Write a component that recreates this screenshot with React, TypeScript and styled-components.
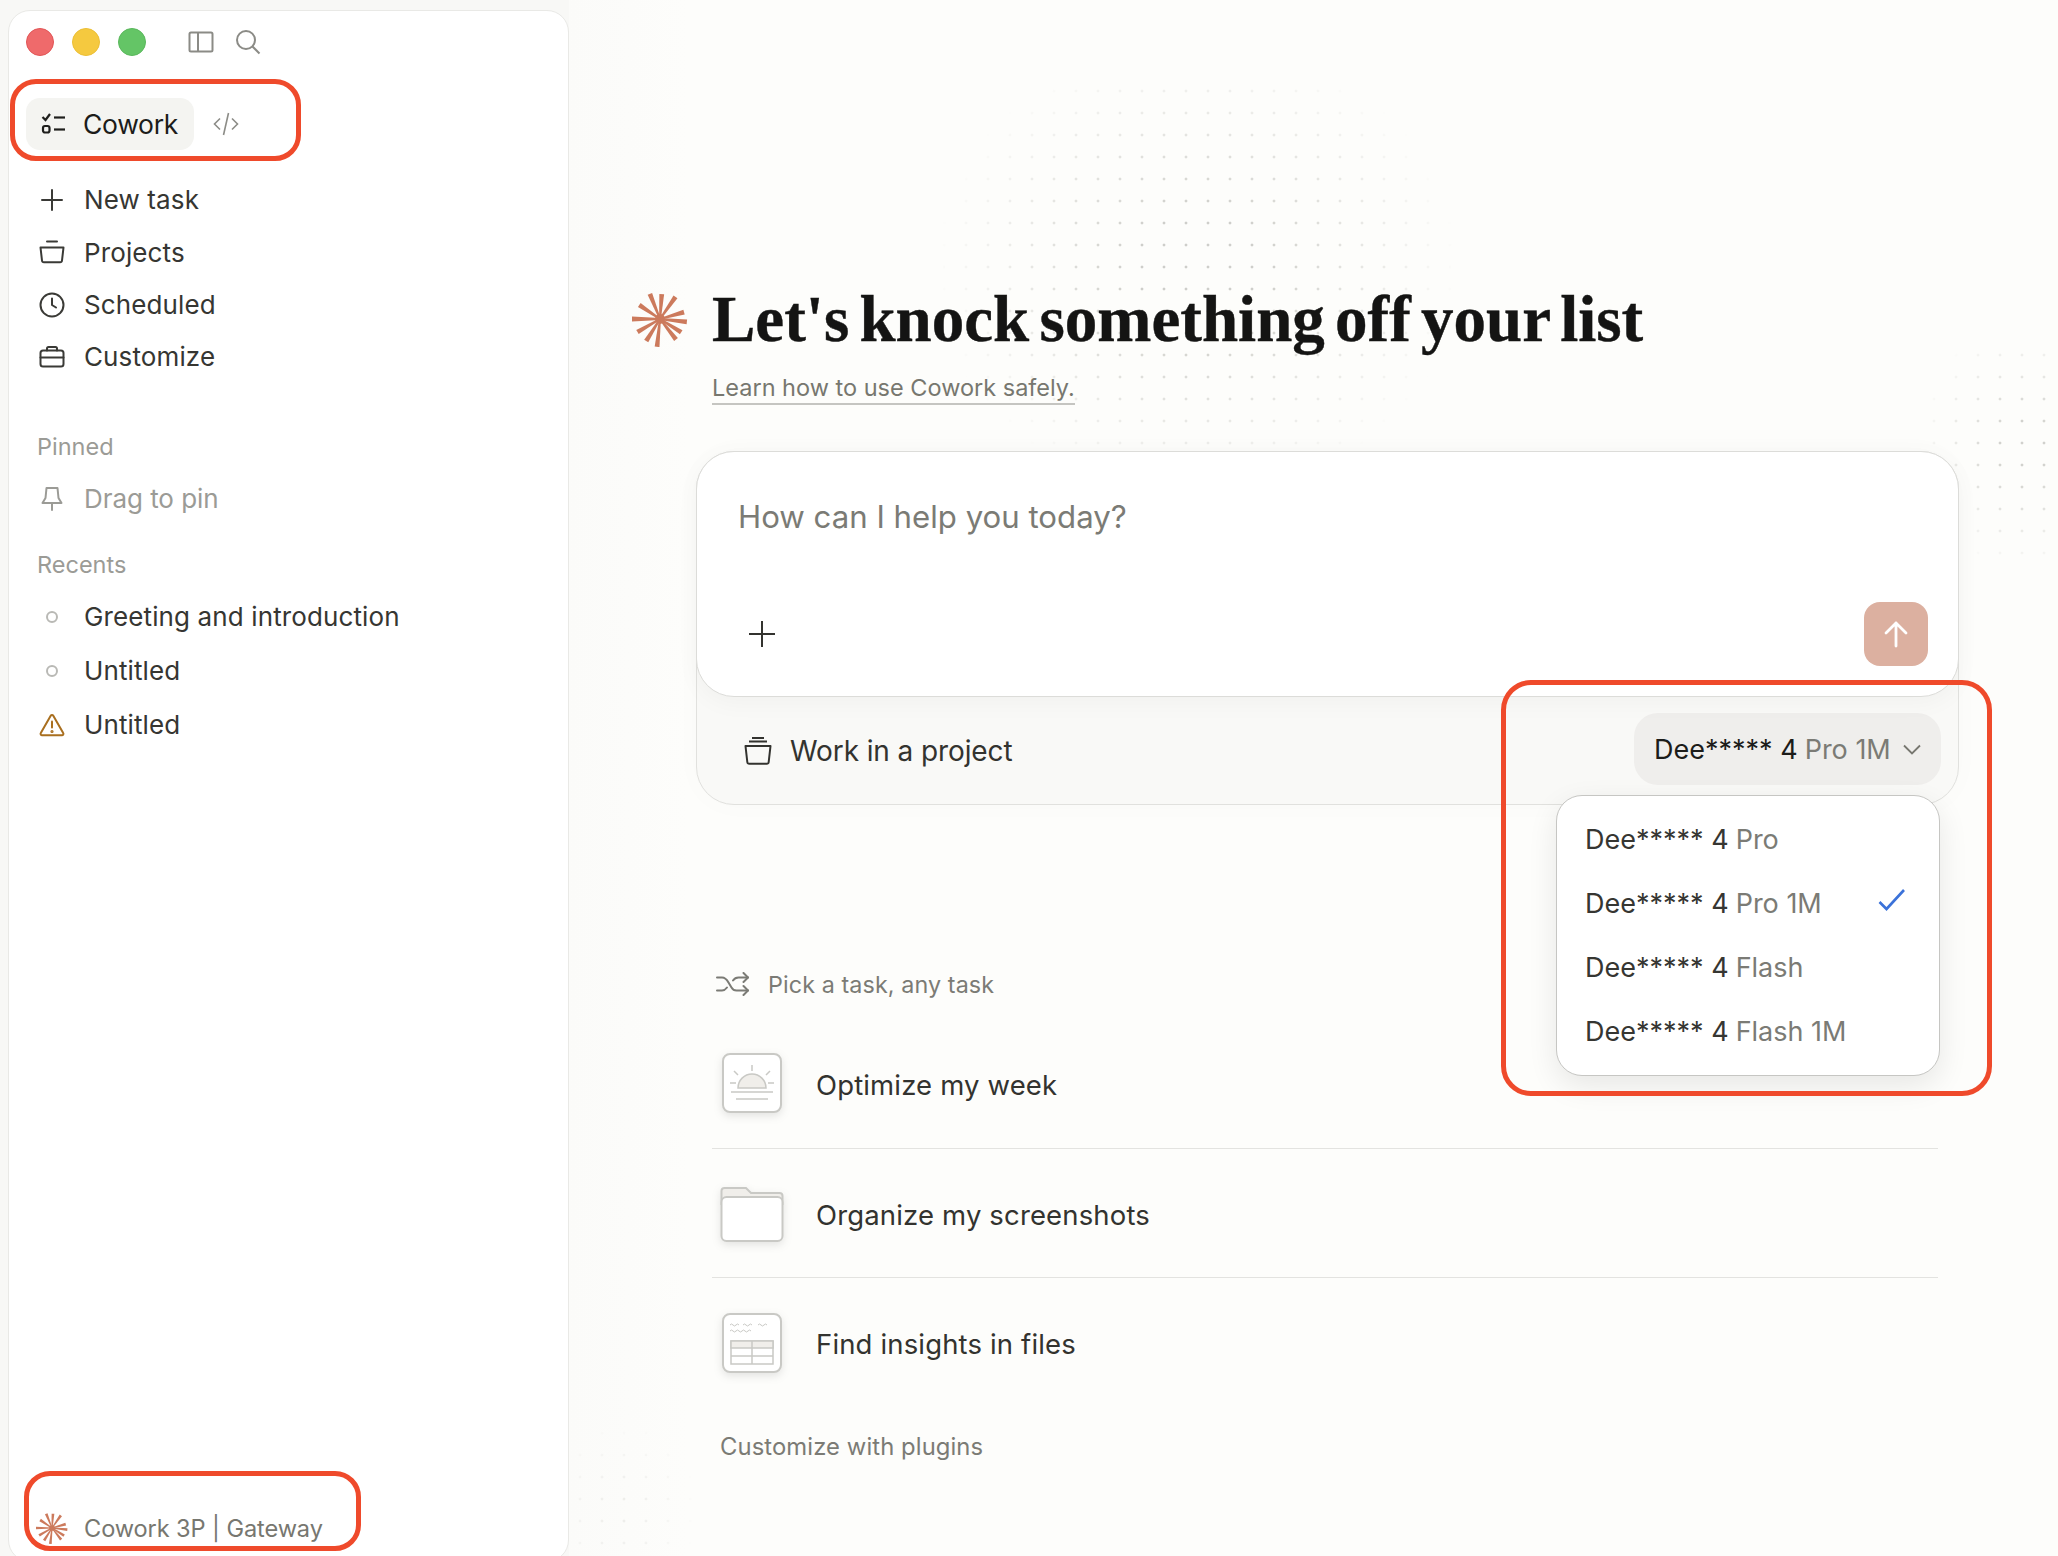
import React from "react";
import styled, { createGlobalStyle } from "styled-components";

const Global = createGlobalStyle`
  html, body { margin: 0; padding: 0; background: #f8f8f6; }
  body { font-family: Inter, "Noto Sans", "Liberation Sans", sans-serif; color: #33332f; -webkit-font-smoothing: antialiased; }
  * { box-sizing: border-box; }
`;

const Page = styled.div`
  width: 2058px; height: 1556px; display: flex; overflow: hidden; position: relative;
  background: #f8f8f6;
`;

const Sidebar = styled.aside`
  width: 561px; height: 1552px; margin: 10px 0 0 8px; flex: none;
  background: #fff; border: 1px solid #e9e9e6; border-radius: 22px;
  display: flex; flex-direction: column; position: relative; padding: 17px 0 0 0;
`;

const TitleBar = styled.div`
  display: flex; align-items: center; height: 28px; padding-left: 17px;
`;
const Light = styled.span<{ $c: string; $b: string }>`
  width: 28px; height: 28px; border-radius: 50%; background: ${p => p.$c};
  border: 1px solid ${p => p.$b}; margin-right: 18px; flex: none;
`;
const TitleIcon = styled.svg`
  width: 26px; height: 26px; fill: none; stroke: #8b8b86; stroke-width: 2; flex: none; margin-right: 21px;
  &:first-of-type { margin-left: 24px; }
`;

const ModeRow = styled.div`
  display: flex; align-items: center; margin: 42px 0 0 17px; height: 52px;
`;
const ModeActive = styled.div`
  width: 168px; height: 52px; border-radius: 14px; background: #f4f4f1;
  display: flex; align-items: center; padding-left: 15px; gap: 16px;
  font-size: 26.500px; letter-spacing: -0.3px; color: #1c1c1a;
`;
const ModeIcon = styled.svg`
  flex: none; fill: none; stroke: #8c8c87; stroke-width: 1.6; width: 26px; height: 26px; margin-left: 19px;
`;

const Nav = styled.nav`
  margin-top: 24px; display: flex; flex-direction: column;
`;
const Row = styled.div<{ $muted?: boolean; $h?: number }>`
  height: ${p => p.$h ?? 52}px; display: flex; align-items: center; padding-left: 28px;
  font-size: 26px; line-height: 1; letter-spacing: ${p => (p.$muted ? "-0.05px" : "0.12px")};
  color: ${p => (p.$muted ? "#9b9b96" : "#363632")};
`;
const RowIcon = styled.span`
  width: 30px; height: 30px; flex: none; margin-right: 17px;
  display: flex; align-items: center; justify-content: center;
  svg { display: block; }
`;
const Bullet = styled.span`
  width: 12px; height: 12px; border-radius: 50%; border: 2px solid #b9b9b5; background: #fff;
`;
const SectionLabel = styled.div<{ $top: number; $bottom: number }>`
  margin-top: ${p => p.$top}px; margin-bottom: ${p => p.$bottom}px; height: 30px; display: flex; align-items: center; padding-left: 28px;
  font-size: 23.500px; color: #9b9b96; letter-spacing: 0;
`;

const Footer = styled.div`
  margin-top: auto; margin-bottom: 13px; display: flex; align-items: center; padding-left: 28px; height: 40px;
  font-size: 23.600px; color: #777770; letter-spacing: -0.1px;
`;

const Callout = styled.div`
  position: absolute; border: 5px solid #ef4a2b; border-radius: 26px; pointer-events: none; z-index: 5;
`;
const CalloutMode = styled(Callout)` left: 1px; top: 68px; width: 291px; height: 82px; `;
const CalloutFooter = styled(Callout)` left: 15px; top: 1460px; width: 337px; height: 80px; `;
const CalloutModel = styled(Callout)` left: 932px; top: 680px; width: 491px; height: 416px; border-radius: 30px; `;

const Main = styled.main`
  flex: 1; position: relative; padding: 283px 0 0 63px;
  background: linear-gradient(90deg, #fbfbf9 0, #fdfdfb 120px);
`;

const DotField = styled.div`
  position: absolute; pointer-events: none;
  background-image: radial-gradient(circle at 11px 11px, #c9c9c4 0, #c9c9c4 1.2px, transparent 1.7px);
  background-size: 22px 22px;
`;
const DotsTop = styled(DotField)`
  left: 342px; top: 80px; width: 572px; height: 396px;
  mask-image: radial-gradient(ellipse 46% 58% at 50% 48%, rgba(0,0,0,.9) 25%, transparent 100%);
`;
const DotsRight = styled(DotField)`
  left: 1354px; top: 344px; width: 135px; height: 230px;
  mask-image: radial-gradient(ellipse 80% 55% at 75% 45%, rgba(0,0,0,.85) 20%, transparent 100%);
`;
const DotsBottom = styled(DotField)`
  left: 0; top: 1400px; width: 130px; height: 160px;
  mask-image: radial-gradient(ellipse 60% 60% at 40% 70%, rgba(0,0,0,.28) 10%, transparent 100%);
`;

const Hero = styled.header`
  display: flex; align-items: center; gap: 24px; height: 72px; position: relative;
`;
const Title = styled.h1`
  margin: 0; font-family: "Liberation Serif", "Times New Roman", serif; font-weight: 700;
  font-size: 65px; letter-spacing: 0; word-spacing: -6px; color: #141413; line-height: 72px; white-space: nowrap;
  -webkit-text-stroke: 0.4px #141413;
`;
const LearnLink = styled.a`
  display: block; width: fit-content; margin: 16px 0 0 80px; position: relative;
  font-size: 23.500px; line-height: 33px; color: #77776f;
  border-bottom: 2px solid #c5c5c1; height: 34px;
`;

const Composer = styled.section`
  position: relative; margin: 46px 0 0 64px; width: 1263px; height: 354px;
  border: 1px solid #e1e1de; border-radius: 38px; background: #f9f9f7;
  box-shadow: 0 0 30px rgba(0,0,0,.02);
`;
const InputCard = styled.div`
  position: relative; height: 246px; margin: -1px -1px 0; background: #fff;
  border: 1px solid #dcdcd9; border-radius: 38px; padding: 45px 0 0 41px;
  font-size: 31.200px; line-height: 40px; color: #7b7b75;
  box-shadow: 0 6px 24px rgba(0,0,0,.035);
`;
const InputTools = styled.div`
  position: absolute; left: 51px; right: 30px; bottom: 30px; display: flex; align-items: center; justify-content: space-between;
`;
const SendButton = styled.div`
  width: 64px; height: 64px; border-radius: 16px; background: #dcb0a0;
  display: flex; align-items: center; justify-content: center;
`;
const Tray = styled.div`
  height: 107px; display: flex; align-items: center; justify-content: space-between; padding: 0 17px 0 46px;
`;
const ProjectLabel = styled.div`
  display: flex; align-items: center; gap: 17px; font-size: 28px; color: #33332f; letter-spacing: -0.1px;
`;
const ModelPill = styled.div`
  height: 72px; width: 307px; border-radius: 24px; background: #efeeec; display: flex; align-items: center;
  padding-left: 20px; font-size: 27px; color: #1c1c1a; margin-top: -3px; white-space: nowrap;
`;
const Variant = styled.span` color: #7b7b75; margin-left: 7px; `;
const Chevron = styled.svg`
  width: 22px; height: 22px; margin-left: 10px; fill: none; stroke: #777770; stroke-width: 1.8; flex: none;
`;

const Menu = styled.div`
  position: absolute; z-index: 3; left: 859px; top: 343px; width: 384px; height: 281px;
  background: #fff; border: 1px solid #c6c6c3; border-radius: 26px; padding: 11px 0 0 28px;
  box-shadow: 0 10px 30px rgba(0,0,0,.09);
`;
const MenuItem = styled.div`
  height: 64px; display: flex; align-items: center; font-size: 27px; color: #363632; white-space: nowrap; position: relative;
`;
const MenuCheck = styled.svg`
  position: absolute; left: 293px; top: 17px; width: 28px; height: 24px; fill: none; stroke: #3b72d9; stroke-width: 2.6;
`;

const Tasks = styled.section`
  margin: 164px 0 0 80px; width: 1226px;
`;
const Prompt = styled.div`
  display: flex; align-items: center; gap: 18px; margin-left: 4px; height: 30px;
  font-size: 23.300px; color: #7b7b75; letter-spacing: 0.1px;
`;
const TaskRow = styled.div<{ $h: number; $top?: number; $last?: boolean }>`
  height: ${p => p.$h}px; padding: ${p => p.$top ?? 0}px 0 0 8px;
  display: flex; align-items: center; gap: 32px;
  border-bottom: ${p => (p.$last ? "none" : "1px solid #e3e3e0")};
`;
const TaskName = styled.span`
  padding-top: 3px; font-size: 27.500px; color: #33332f; letter-spacing: 0.15px;
`;
const TaskThumb = styled.svg`
  width: 64px; height: 64px; flex: none; overflow: visible; filter: drop-shadow(0 3px 4px rgba(0,0,0,.1));
`;
const PluginsLink = styled.div`
  margin: 23px 0 0 8px; font-size: 23.800px; line-height: 34px; color: #7b7b75; letter-spacing: 0.1px;
`;

const spokes: [number, number][] = [
  [-112, 27], [-86, 25], [-55, 27], [-16, 25], [6, 27], [32, 25], [52, 26],
  [96, 28], [122, 26], [150, 26], [180, 28], [214, 25],
];

function Star({ size, color = "#cc7a5c" }: { size: number; color?: string }) {
  const polygons = spokes.map(([a, len]) => {
    const r = (a * Math.PI) / 180;
    const dx = Math.cos(r), dy = Math.sin(r);
    const nx = -dy, ny = dx;
    const c = 28;
    const pts = [
      [c + nx * 0.9, c + ny * 0.9],
      [c + dx * len + nx * 2.4, c + dy * len + ny * 2.4],
      [c + dx * len - nx * 2.4, c + dy * len - ny * 2.4],
      [c - nx * 0.9, c - ny * 0.9],
    ];
    return pts.map(p => p.map(v => v.toFixed(2)).join(",")).join(" ");
  });
  return (
    <svg width={size} height={size} viewBox="0 0 56 56" style={{ flex: "none" }}>
      <circle cx="28" cy="28" r="5" fill={color} />
      {polygons.map((p, i) => <polygon key={i} points={p} fill={color} />)}
    </svg>
  );
}

const strokeIcon = { fill: "none", stroke: "#3a3a36", strokeWidth: 2, strokeLinecap: "round" as const, strokeLinejoin: "round" as const };

export default function App() {
  return (
    <Page>
      <Global />
      <Sidebar>
        <TitleBar>
          <Light $c="#ef6a6b" $b="#e25556" />
          <Light $c="#f5c93f" $b="#ecbf36" />
          <Light $c="#64c566" $b="#5ab85c" />
          <TitleIcon viewBox="0 0 26 26"><rect x="1.500" y="3.500" width="23" height="19" rx="1.500" /><path d="M10 3.500v19" /></TitleIcon>
          <TitleIcon viewBox="0 0 26 26"><circle cx="11" cy="11" r="9" /><path d="M17.500 17.500l7 7" /></TitleIcon>
        </TitleBar>
        <ModeRow>
          <ModeActive>
            <svg width="26" height="26" viewBox="0 0 26 26" fill="none" stroke="#1f1f1d" strokeWidth="2.200">
              <path d="M1.500 6l3 3 4.500-6" /><path d="M13 6.500h11" /><rect x="2" y="15" width="6.500" height="6.500" rx="2" /><path d="M13 18.500h11" />
            </svg>
            Cowork
          </ModeActive>
          <ModeIcon viewBox="0 0 26 26"><path d="M7 7.500l-5.500 5.500 5.500 5.500" /><path d="M19 7.500l5.500 5.500-5.500 5.500" /><path d="M15.500 2l-5 22" /></ModeIcon>
        </ModeRow>
        <Nav>
          <Row>
            <RowIcon><svg width="24" height="24" viewBox="0 0 24 24" {...strokeIcon}><path d="M12 2v20M2 12h20" /></svg></RowIcon>
            New task
          </Row>
          <Row $h={53}>
            <RowIcon><svg width="26" height="26" viewBox="0 0 26 26" {...strokeIcon}><path d="M8 1.500h10" /><path d="M1.500 7.500h23l-1.500 13a2 2 0 0 1-2 1.800H5a2 2 0 0 1-2-1.800z" /></svg></RowIcon>
            Projects
          </Row>
          <Row>
            <RowIcon><svg width="26" height="26" viewBox="0 0 26 26" {...strokeIcon}><circle cx="13" cy="13" r="11.500" /><path d="M13 6.500V13l4 2.500" /></svg></RowIcon>
            Scheduled
          </Row>
          <Row>
            <RowIcon><svg width="26" height="26" viewBox="0 0 26 26" {...strokeIcon}><rect x="1.500" y="6.500" width="23" height="16" rx="2.500" /><path d="M8 6.500V4.500a1.500 1.500 0 0 1 1.500-1.500h7A1.500 1.500 0 0 1 18 4.500v2" /><path d="M1.500 13.500h23" /></svg></RowIcon>
            Customize
          </Row>
        </Nav>
        <SectionLabel $top={48} $bottom={12}>Pinned</SectionLabel>
        <Row $muted>
          <RowIcon><svg width="24" height="26" viewBox="0 0 24 26" fill="none" stroke="#9b9b96" strokeWidth="2" strokeLinejoin="round" strokeLinecap="round"><path d="M6.500 2h11l1 10 3 5H2.500l3-5z" /><path d="M12 17v7" /></svg></RowIcon>
          Drag to pin
        </Row>
        <SectionLabel $top={24} $bottom={11}>Recents</SectionLabel>
        <Row $h={54}><RowIcon><Bullet /></RowIcon>Greeting and introduction</Row>
        <Row $h={54}><RowIcon><Bullet /></RowIcon>Untitled</Row>
        <Row $h={54}>
          <RowIcon><svg width="26" height="24" viewBox="0 0 26 24" fill="none" stroke="#a96f1f" strokeWidth="2" strokeLinejoin="round" strokeLinecap="round"><path d="M11.700 2.700L1.800 20a1.500 1.500 0 0 0 1.300 2.300h19.800a1.500 1.500 0 0 0 1.300-2.300L14.300 2.700a1.500 1.500 0 0 0-2.600 0z" /><path d="M13 8.500v6" /><circle cx="13" cy="18.500" r=".6" fill="#a96f1f" /></svg></RowIcon>
          Untitled
        </Row>
        <Footer>
          <RowIcon><Star size={32} /></RowIcon>
          Cowork 3P | Gateway
        </Footer>
        <CalloutMode />
        <CalloutFooter />
      </Sidebar>
      <Main>
        <DotsTop />
        <DotsRight />
        <DotsBottom />
        <Hero>
          <Star size={56} />
          <Title>Let's knock something off your list</Title>
        </Hero>
        <LearnLink>Learn how to use Cowork safely.</LearnLink>
        <Composer>
          <InputCard>
            How can I help you today?
            <InputTools>
              <svg width="28" height="28" viewBox="0 0 28 28" fill="none" stroke="#33332f" strokeWidth="2"><path d="M14 1v26M1 14h26" /></svg>
              <SendButton>
                <svg width="26" height="28" viewBox="0 0 26 28" fill="none" stroke="#fff" strokeWidth="2.800" strokeLinecap="round" strokeLinejoin="round"><path d="M13 26V3M3 13L13 3l10 10" /></svg>
              </SendButton>
            </InputTools>
          </InputCard>
          <Tray>
            <ProjectLabel>
              <svg width="30" height="30" viewBox="0 0 30 30" fill="none" stroke="#33332f" strokeWidth="2" strokeLinejoin="round"><path d="M9 2h12M6 5.500h18" /><path d="M2.500 10h25l-1.800 16a2 2 0 0 1-2 1.800H6.300a2 2 0 0 1-2-1.800z" /></svg>
              Work in a project
            </ProjectLabel>
            <ModelPill>
              Dee***** 4<Variant>Pro 1M</Variant>
              <Chevron viewBox="0 0 22 22"><path d="M3 7.500l8 8 8-8" /></Chevron>
            </ModelPill>
          </Tray>
          <Menu>
            <MenuItem>Dee***** 4<Variant>Pro</Variant></MenuItem>
            <MenuItem>Dee***** 4<Variant>Pro 1M</Variant><MenuCheck viewBox="0 0 28 24"><path d="M1.500 14l7 7L26 2" /></MenuCheck></MenuItem>
            <MenuItem>Dee***** 4<Variant>Flash</Variant></MenuItem>
            <MenuItem>Dee***** 4<Variant>Flash 1M</Variant></MenuItem>
          </Menu>
        </Composer>
        <Tasks>
          <Prompt>
            <svg width="34" height="24" viewBox="0 0 34 24" fill="none" stroke="#7b7b75" strokeWidth="2" strokeLinecap="round" strokeLinejoin="round">
              <path d="M1 5.500h5c3 0 4.500 1.500 6.500 5l3 5c2 3.500 3.500 3 6 3H32" /><path d="M1 18.500h5c2.500 0 3.500-1 5-3" /><path d="M17 8.500c1.500-2.200 3-3 5.500-3H32" /><path d="M27.500 1L32 5.500 27.500 10" /><path d="M27.500 14l4.500 4.500-4.500 4.500" />
            </svg>
            Pick a task, any task
          </Prompt>
          <TaskRow $h={150} $top={19}>
            <TaskThumb viewBox="0 0 64 64">
              <rect x="3" y="3" width="58" height="58" rx="7" fill="#fff" stroke="#c9c9c5" strokeWidth="2" />
              <path d="M18 37a14 14 0 0 1 28 0z" fill="#f0eeea" stroke="#c9c9c5" strokeWidth="1.500" />
              <path d="M32 14v6M14 20l4 4M50 20l-4 4M10 32h6M48 32h6M11 41h42M16 48h32" stroke="#c9c9c5" strokeWidth="1.500" fill="none" />
            </TaskThumb>
            <TaskName>Optimize my week</TaskName>
          </TaskRow>
          <TaskRow $h={129}>
            <TaskThumb viewBox="0 0 64 64">
              <path d="M1.500 10a3 3 0 0 1 3-3H26l5 5h28.500a3 3 0 0 1 3 3v8h-61z" fill="#f0eeea" stroke="#c9c9c5" strokeWidth="2" />
              <rect x="1.500" y="16" width="61" height="44" rx="5" fill="#fff" stroke="#c9c9c5" strokeWidth="2" />
            </TaskThumb>
            <TaskName>Organize my screenshots</TaskName>
          </TaskRow>
          <TaskRow $last $h={129}>
            <TaskThumb viewBox="0 0 64 64">
              <rect x="3" y="3" width="58" height="58" rx="7" fill="#fff" stroke="#c9c9c5" strokeWidth="2" />
              <path d="M10 14q1.500-2 3 0t3 0 3 0M23 14q1.500-2 3 0t3 0 3 0M38 14q1.500-2 3 0t3 0 3 0M10 20q1.500-2 3 0t3 0 3 0 3 0 3 0 3 0 3 0" fill="none" stroke="#c9c9c5" strokeWidth="1" />
              <rect x="11" y="30" width="42" height="23" fill="#fff" stroke="#c9c9c5" strokeWidth="1.500" />
              <rect x="11" y="30" width="42" height="7" fill="#f0eeea" stroke="#c9c9c5" strokeWidth="1.500" />
              <path d="M32 30v23M11 45h42" stroke="#c9c9c5" strokeWidth="1.500" />
            </TaskThumb>
            <TaskName>Find insights in files</TaskName>
          </TaskRow>
          <PluginsLink>Customize with plugins</PluginsLink>
        </Tasks>
        <CalloutModel />
      </Main>
    </Page>
  );
}
